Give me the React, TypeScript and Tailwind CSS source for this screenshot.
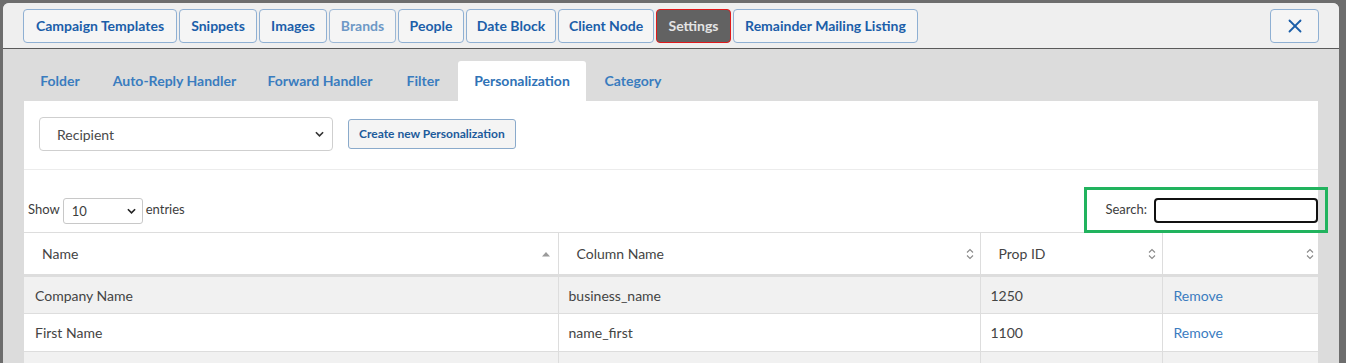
import { X } from "lucide-react";

const topTabs = [
    { label: "Campaign Templates", w: "w-[154px]" },
    { label: "Snippets", w: "w-[78px]" },
    { label: "Images", w: "w-[68px]" },
    { label: "Brands", w: "w-[67px]", disabled: true },
    { label: "People", w: "w-[66px]" },
    { label: "Date Block", w: "w-[90px]" },
    { label: "Client Node", w: "w-[96px]" },
    { label: "Settings", w: "w-[75px]", active: true },
    { label: "Remainder Mailing Listing", w: "w-[185px]" },
];

const subTabs = [
    { label: "Folder", w: "w-[74px]" },
    { label: "Auto-Reply Handler", w: "w-[155px]" },
    { label: "Forward Handler", w: "w-[136px]" },
    { label: "Filter", w: "w-[70px]" },
    { label: "Personalization", w: "w-[128px]", active: true },
    { label: "Category", w: "w-[94px]" },
];

const rows = [
    { name: "Company Name", column: "business_name", prop: "1250" },
    { name: "First Name", column: "name_first", prop: "1100" },
    { name: "", column: "", prop: "" },
];

function Chevron({ className }: { className: string }) {
    return (
        <svg viewBox="0 0 10 6" className={className} fill="none" stroke="currentColor" strokeWidth="1.8">
            <path d="M1 1l4 4 4-4" />
        </svg>
    );
}

function SortBoth() {
    return (
        <svg viewBox="0 0 8 12" className="w-[8px] h-[12px] text-[#8a8a8a]" fill="none" stroke="currentColor" strokeWidth="1.1">
            <path d="M1 4.5l3-3 3 3" />
            <path d="M1 7.5l3 3 3-3" />
        </svg>
    );
}

function SortUp() {
    return (
        <svg viewBox="0 0 8 6" className="w-[8px] h-[6px] text-[#9a9a9a]" fill="currentColor">
            <path d="M0 5.5L4 1l4 4.5z" />
        </svg>
    );
}

export default function App() {
    return (
        <div
            className="w-[1346px] h-[363px] overflow-hidden bg-[#6d6d6d] pt-[3px] pl-[3px]"
            style={{ fontFamily: "Lato, 'Noto Sans', sans-serif" }}
        >
            <div className="w-[1336px] h-[400px] rounded-t-[6px] bg-[#dcdcdc] relative">

                {/* header */}
                <div className="h-[46px] rounded-t-[6px] bg-[#efefef] border-b border-[#5a5a5a] flex items-start justify-between pl-[20px] pr-[20px] pt-[6px]">
                    <div className="flex gap-[2px]">
                        {topTabs.map((t) => (
                            <div
                                key={t.label}
                                className={
                                    t.active
                                        ? `${t.w} h-[34px] pb-[1px] rounded-[4px] border border-[#e0191b] bg-[#626262] text-[#e4e4e4] text-[14px] font-bold flex items-center justify-center`
                                        : t.disabled
                                        ? `${t.w} h-[34px] pb-[1px] rounded-[4px] border border-[#9cb8d6] bg-[#f5f5f5] text-[#6d98c6] text-[14px] font-bold flex items-center justify-center`
                                        : `${t.w} h-[34px] pb-[1px] rounded-[4px] border border-[#8fb0d3] bg-[#f5f5f5] text-[#1b5ea9] text-[14px] font-bold flex items-center justify-center`
                                }
                            >
                                {t.label}
                            </div>
                        ))}
                    </div>
                    <div className="w-[49px] h-[34px] rounded-[4px] border border-[#8fb0d3] bg-[#f5f5f5] flex items-center justify-center text-[#1b5ea9]">
                        <X size={22} strokeWidth={2} />
                    </div>
                </div>

                {/* body */}
                <div className="pl-[21px] pr-[21px]">
                    <div className="flex h-[52px] items-end -ml-[1px]">
                        {subTabs.map((s) => (
                            <div
                                key={s.label}
                                className={
                                    s.active
                                        ? `${s.w} h-[40px] pb-[1px] flex items-center justify-center bg-white rounded-t-[3px] text-[#2f72b6] text-[14px] font-bold`
                                        : `${s.w} h-[40px] pb-[1px] flex items-center justify-center text-[#3a7cbf] text-[14px] font-bold`
                                }
                            >
                                {s.label}
                            </div>
                        ))}
                    </div>

                    <div className="bg-white">
                        <div className="flex items-center gap-[15px] pl-[15px] pt-[16px] pb-[18px] border-b border-[#ececec]">
                            <div className="w-[294px] h-[34px] rounded-[4px] border border-[#cfcfcf] flex items-center justify-between pl-[17px] pr-[8px] text-[14px] text-[#4a4a4a]">
                                <span>Recipient</span>
                                <Chevron className="w-[9px] h-[6px] text-[#333]" />
                            </div>
                            <div className="h-[30px] px-[10px] rounded-[3px] border border-[#8aaacb] bg-[#f4f4f4] flex items-center text-[12px] font-bold text-[#1d5b9b]">
                                Create new Personalization
                            </div>
                        </div>

                        <div className="flex items-center justify-between pl-[4px] pt-[26px] pb-[8px]">
                            <div className="flex items-center gap-[3px] text-[13px] text-[#3d3d3d]">
                                <span>Show</span>
                                <div className="w-[80px] h-[26px] rounded-[3px] border border-[#c8c8c8] flex items-center justify-between pl-[8px] pr-[6px] mt-[2px]">
                                    <span className="mt-[2px]">10</span>
                                    <Chevron className="w-[9px] h-[6px] text-[#222]" />
                                </div>
                                <span>entries</span>
                            </div>
                            <div className="flex items-center gap-[7px] text-[13px] text-[#3d3d3d]">
                                <span>Search:</span>
                                <div className="w-[164px] h-[25px] rounded-[4px] border-2 border-[#111]" />
                            </div>
                        </div>

                        <table className="w-full border-collapse text-[14px] text-[#444]">
                            <thead>
                                <tr className="h-[43px] border-t border-b-[3px] border-[#dddddd]">
                                    <th className="w-[534px] pl-[18px] pr-[8px] text-left font-normal border-r border-[#dddddd]">
                                        <div className="flex items-center justify-between">
                                            <span>Name</span>
                                            <SortUp />
                                        </div>
                                    </th>
                                    <th className="w-[422px] pl-[18px] pr-[6px] text-left font-normal border-r border-[#dddddd]">
                                        <div className="flex items-center justify-between">
                                            <span>Column Name</span>
                                            <SortBoth />
                                        </div>
                                    </th>
                                    <th className="w-[182px] pl-[18px] pr-[6px] text-left font-normal border-r border-[#dddddd]">
                                        <div className="flex items-center justify-between">
                                            <span>Prop ID</span>
                                            <SortBoth />
                                        </div>
                                    </th>
                                    <th className="pl-[18px] pr-[4px] text-left font-normal">
                                        <div className="flex items-center justify-end">
                                            <SortBoth />
                                        </div>
                                    </th>
                                </tr>
                            </thead>
                            <tbody>
                                {rows.map((r, i) => (
                                    <tr
                                        key={i}
                                        className={i % 2 === 0 ? "h-[38px] bg-[#f1f1f1] border-b border-[#dddddd]" : "h-[38px] bg-white border-b border-[#dddddd]"}
                                    >
                                        <td className="pl-[11px] border-r border-[#dddddd]">{r.name}</td>
                                        <td className="pl-[10px] border-r border-[#dddddd]">{r.column}</td>
                                        <td className="pl-[10px] border-r border-[#dddddd]">{r.prop}</td>
                                        <td className="pl-[11px] text-[#3a7cbf]">{r.name ? "Remove" : ""}</td>
                                    </tr>
                                ))}
                            </tbody>
                        </table>
                    </div>
                </div>

                {/* highlight annotation */}
                <div className="absolute left-[1081px] top-[184px] w-[244px] h-[46px] border-[3px] border-[#21b35e]" />
            </div>
        </div>
    );
}
